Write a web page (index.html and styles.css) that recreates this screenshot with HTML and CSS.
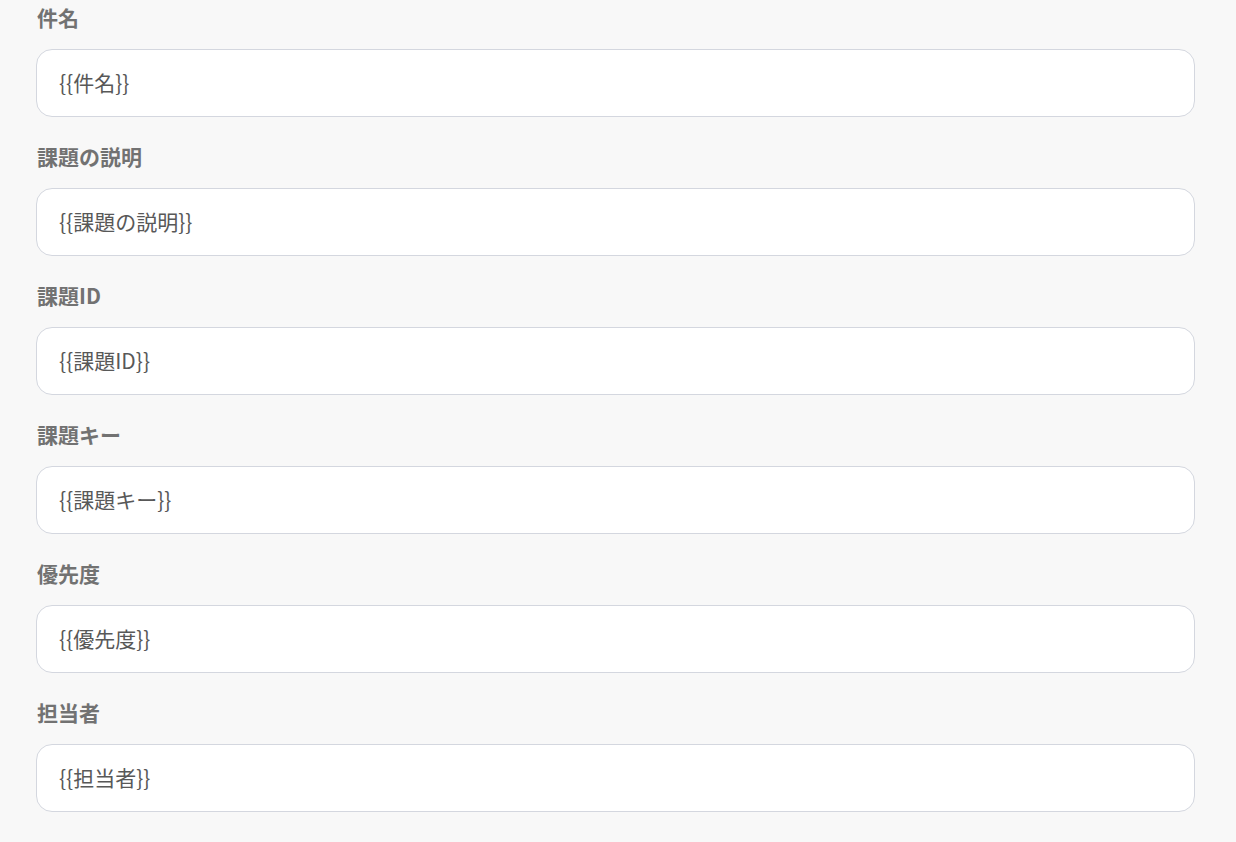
FILE: index.html
```html
<!DOCTYPE html>
<html lang="ja">
<head>
<meta charset="utf-8">
<link rel="stylesheet" href="styles.css">
</head>
<body>
<div class="form">
  <div class="field">
    <div class="label">件名</div>
    <div class="input">{{件名}}</div>
  </div>
  <div class="field">
    <div class="label">課題の説明</div>
    <div class="input">{{課題の説明}}</div>
  </div>
  <div class="field">
    <div class="label">課題ID</div>
    <div class="input">{{課題ID}}</div>
  </div>
  <div class="field">
    <div class="label">課題キー</div>
    <div class="input">{{課題キー}}</div>
  </div>
  <div class="field">
    <div class="label">優先度</div>
    <div class="input">{{優先度}}</div>
  </div>
  <div class="field">
    <div class="label">担当者</div>
    <div class="input">{{担当者}}</div>
  </div>
</div>
</body>
</html>
```
FILE: styles.css
```css
html, body {
  margin: 0;
  padding: 0;
  background: #f8f8f8;
  height: 100%;
}
body {
  font-family: "Noto Sans CJK JP", "Noto Sans", sans-serif;
}
.form {
  display: flex;
  flex-direction: column;
  gap: 25px;
  padding: 3px 41px 0 36px;
}
.field {
  display: flex;
  flex-direction: column;
  gap: 18px;
}
.label {
  font-size: 21px;
  font-weight: 700;
  color: #727272;
  line-height: 28px;
  padding-left: 1px;
}
.input {
  box-sizing: border-box;
  height: 68px;
  border: 1px solid #d4d7df;
  border-radius: 16px;
  background: #fff;
  display: flex;
  align-items: center;
  padding: 0 22px 3px;
  font-size: 21px;
  color: #585858;
}
```
